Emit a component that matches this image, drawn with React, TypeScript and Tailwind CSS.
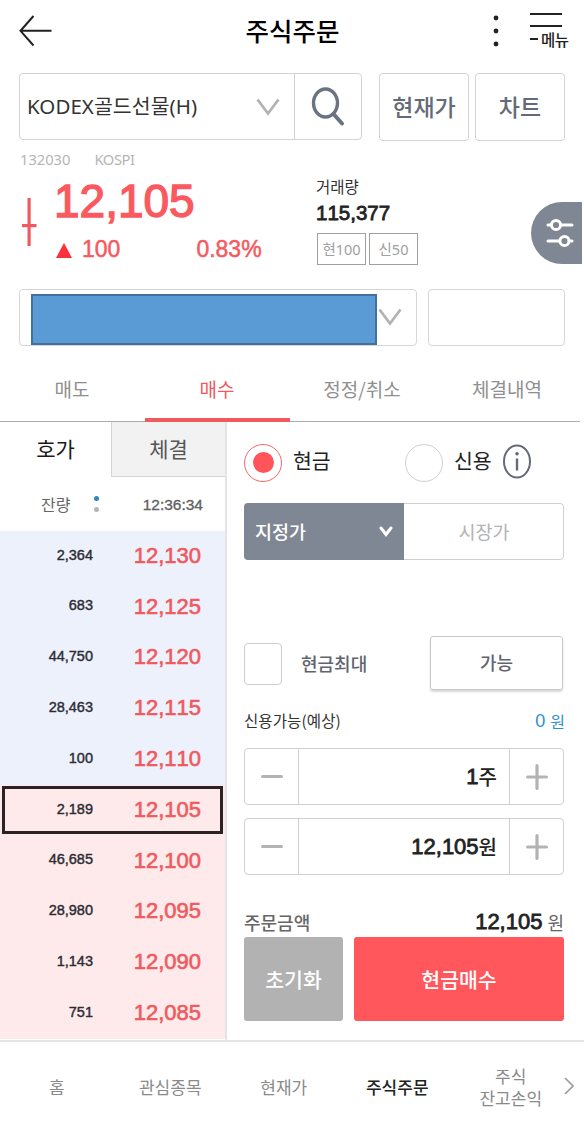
import { clsx } from "clsx";

interface Quote {
  volume: string;
  price: string;
}

const asks: Quote[] = [
  { volume: "2,364", price: "12,130" },
  { volume: "683", price: "12,125" },
  { volume: "44,750", price: "12,120" },
  { volume: "28,463", price: "12,115" },
  { volume: "100", price: "12,110" },
];

const bids: Quote[] = [
  { volume: "2,189", price: "12,105" },
  { volume: "46,685", price: "12,100" },
  { volume: "28,980", price: "12,095" },
  { volume: "1,143", price: "12,090" },
  { volume: "751", price: "12,085" },
];

const orderTabs = ["매도", "매수", "정정/취소", "체결내역"];
const navItems = ["홈", "관심종목", "현재가", "주식주문", "주식\n잔고손익"];

const CURRENT_PRICE = "12,105";

const Chevron = ({ className }: { className?: string }) => (
  <svg className={className} width="24" height="18" viewBox="0 0 24 18" fill="none">
    <path d="M1.5 1.5 12 15.5 22.5 1.5" stroke="#b3b3b3" strokeWidth="2.8" />
  </svg>
);

const Header = () => (
  <header className="flex h-[62px] items-center justify-between pl-[19px] pr-[14px]">
    <div className="w-[78px]">
      <svg width="34" height="32" viewBox="0 0 34 32" fill="none" stroke="#222" strokeWidth="2">
        <path d="M14.5 1 1.5 15.8 14.5 30.5M1.5 15.8H32.5" />
      </svg>
    </div>
    <h1 className="-mt-[2px] mr-[5px] text-[25.5px] font-medium leading-none text-black">주식주문</h1>
    <div className="flex w-[77px] items-center justify-between">
      <svg width="6" height="32" viewBox="0 0 6 32" fill="#222">
        <circle cx="3" cy="3" r="2.4" />
        <circle cx="3" cy="16" r="2.4" />
        <circle cx="3" cy="29" r="2.4" />
      </svg>
      <div className="-mt-[2px] flex w-[40px] flex-col">
        <span className="h-[2px] w-[32px] bg-[#222]" />
        <span className="mt-[10px] h-[2px] w-[32px] bg-[#222]" />
        <span className="mt-[3px] flex items-center gap-[3px]">
          <span className="h-[2px] w-[8px] shrink-0 bg-[#222]" />
          <span className="whitespace-nowrap text-[15.5px] font-medium leading-[18px] tracking-[-0.5px] text-[#222]">
            메뉴
          </span>
        </span>
      </div>
    </div>
  </header>
);

const SearchRow = () => (
  <div className="mt-[11px] flex pl-[19px]">
    <div className="flex h-[67px] w-[343px] rounded-[4px] border-[1.5px] border-[#d3d3d3]">
      <div className="flex w-[275px] items-center justify-between border-r border-[#d3d3d3] pl-[7px] pr-[14px]">
        <span className="font-['Noto_Sans','Noto_Sans_CJK_KR',sans-serif] text-[20.5px] leading-none tracking-[0.05px] text-[#333]">
          KODEX골드선물(H)
        </span>
        <Chevron />
      </div>
      <div className="flex flex-1 items-center justify-center">
        <svg width="34" height="40" viewBox="0 0 34 40" fill="none" stroke="#6b7280">
          <ellipse cx="14.5" cy="16" rx="12" ry="14" strokeWidth="3.4" />
          <path d="m22.5 27 8.5 9.5" strokeWidth="4" strokeLinecap="round" />
        </svg>
      </div>
    </div>
    <button className="ml-[17px] h-[68px] w-[90px] rounded-[4px] border-[1.5px] border-[#d3d3d3] pb-[2px] text-[23px] font-medium text-[#646a77]">
      현재가
    </button>
    <button className="ml-[6px] h-[68px] w-[90px] rounded-[4px] border-[1.5px] border-[#d3d3d3] pb-[2px] text-[23px] font-medium text-[#646a77]">
      차트
    </button>
  </div>
);

const PriceSummary = () => (
  <section className="flex h-[148px] justify-between pl-[20px] pr-[2px]">
    <div className="w-[296px]">
      <div className="mt-[9px] flex gap-[24px] font-['Noto_Sans',sans-serif] text-[14.7px] leading-[18px] text-[#b5b5b5]">
        <span>132030</span>
        <span className="tracking-[-0.4px]">KOSPI</span>
      </div>
      <div className="mt-[8px] flex text-[#fa5a5f]">
        <svg className="ml-[2px] mt-[21px]" width="15" height="50" viewBox="0 0 15 50" fill="#f0595e">
          <rect x="5.5" y="1" width="3.2" height="48" />
          <rect x="0" y="27" width="14.5" height="3.2" />
        </svg>
        <div className="ml-[17px] font-['Liberation_Sans',Arial,sans-serif]">
          <div className="mt-[2px] text-[46px] leading-[46px] [-webkit-text-stroke:1.4px_#fa5a5f]">12,105</div>
          <div className="mt-[13px] flex items-center text-[23px] leading-[24px] [-webkit-text-stroke:0.5px_#f0595e]">
            <svg className="ml-[2px] mt-[2px]" width="16" height="15" viewBox="0 0 16 15">
              <path d="M8 0 16 15H0z" fill="#fb3038" />
            </svg>
            <span className="ml-[10px]">100</span>
            <span className="ml-[76px]">0.83%</span>
          </div>
        </div>
      </div>
    </div>
    <div className="flex-1 pt-[36px]">
      <div className="text-[15.5px] leading-[18px] text-[#333]">거래량</div>
      <div className="mt-[7px] font-['Liberation_Sans',Arial,sans-serif] text-[20.5px] leading-[22px] text-[#222] [-webkit-text-stroke:0.8px_#222] [font-kerning:none]">
        115,377
      </div>
      <div className="ml-px mt-[9px] flex gap-[3px] font-['Noto_Sans','Noto_Sans_CJK_KR',sans-serif] text-[14.5px] leading-none text-[#a0a0a0]">
        <span className="flex h-[32px] w-[49px] items-center justify-center border-[1.5px] border-[#a0a0a0]">현100</span>
        <span className="flex h-[32px] w-[49px] items-center justify-center border-[1.5px] border-[#a0a0a0]">신50</span>
      </div>
    </div>
    <div className="mt-[61px] flex h-[62px] w-[51px] items-center rounded-l-[31px] bg-[#808794] pl-[15px]">
      <svg width="28" height="30" viewBox="0 0 28 30" fill="none" stroke="#fff" strokeWidth="3" strokeLinecap="round">
        <path d="M2 7h3M15 7h11M2 23h11M23 23h3" />
        <circle cx="10" cy="7" r="4.6" />
        <circle cx="18.5" cy="23" r="4.6" />
      </svg>
    </div>
  </section>
);

const AccountRow = () => (
  <div className="flex gap-[11px] pl-[19px]">
    <div className="flex h-[57px] w-[398px] rounded-[4px] border-[1.5px] border-[#d6d6d6] pl-[11px] pt-[4px]">
      <div className="h-[51px] w-[346px] shrink-0 border-2 border-[#41719c] bg-[#5b9bd5]" />
      <Chevron className="ml-px mt-[14px]" />
    </div>
    <div className="h-[57px] w-[137px] rounded-[4px] border-[1.5px] border-[#d6d6d6]" />
  </div>
);

const OrderTabs = () => (
  <div className="mt-[12px] flex h-[64px] w-[580px] border-b-[1.5px] border-[#a9aeac]">
    {orderTabs.map((tab) => (
      <div
        key={tab}
        className={clsx(
          "-mb-px flex w-[145px] justify-center pr-px pt-[21px] text-[19px] leading-[20px]",
          tab === "매수" ? "border-b-4 border-[#f0595e] text-[#f0595e]" : "text-[#8f8f8f]"
        )}
      >
        {tab}
      </div>
    ))}
  </div>
);

const QuoteRow = ({ volume, price }: Quote) => (
  <div className="relative flex h-[50.8px] items-center pb-[2px] font-['Liberation_Sans',Arial,sans-serif] [font-kerning:none]">
    {price === CURRENT_PRICE && (
      <div className="absolute left-[2px] top-[1px] h-[48px] w-[221px] border-[3px] border-[#2b2224]" />
    )}
    <span className="w-[93px] text-right text-[14.5px] text-[#2b2b33] [-webkit-text-stroke:0.4px_#2b2b33]">
      {volume}
    </span>
    <span className="w-[108px] text-right text-[22px] text-[#f0595e] [-webkit-text-stroke:0.6px_#f0595e]">
      {price}
    </span>
  </div>
);

const OrderBook = () => (
  <div className="w-[227px] border-r-2 border-[#e4e4e6]">
    <div className="flex h-[55px] text-[21px]">
      <div className="flex w-[111px] items-center justify-center pb-[2px] text-[#1a1a1a]">호가</div>
      <div className="flex flex-1 items-center justify-center border-b border-l border-[#d5d5d5] bg-[#f2f2f2] text-[#555]">
        체결
      </div>
    </div>
    <div className="flex h-[54px] items-center text-[#666]">
      <span className="ml-[41px] w-[50px] text-[16px]">잔량</span>
      <div className="flex w-[10px] flex-col items-center gap-[6px]">
        <span className="size-[5px] rounded-full bg-[#2f86c0]" />
        <span className="size-[5px] rounded-full bg-[#b5b5b5]" />
      </div>
      <span className="flex-1 pr-[22px] pt-[2px] text-right font-['Liberation_Sans',Arial,sans-serif] text-[15.5px] [-webkit-text-stroke:0.3px_#555]">
        12:36:34
      </span>
    </div>
    <div className="bg-[#edf1fc]">
      {asks.map((quote) => (
        <QuoteRow key={quote.price} {...quote} />
      ))}
    </div>
    <div className="bg-[#feeaea]">
      {bids.map((quote) => (
        <QuoteRow key={quote.price} {...quote} />
      ))}
    </div>
  </div>
);

const Stepper = ({ value, unit }: { value: string; unit: string }) => (
  <div className="flex h-[57px] w-[320px] rounded-[4px] border-[1.5px] border-[#d0d0d0]">
    <button className="flex w-[53px] items-center justify-center">
      <span className="h-[3.5px] w-[22px] rounded-sm bg-[#b3b3b3]" />
    </button>
    <div className="flex flex-1 items-center justify-end border-x-[1.5px] border-[#d0d0d0] pr-[12px] leading-none text-[#222]">
      <span className="font-['Liberation_Sans',Arial,sans-serif] text-[22px] [-webkit-text-stroke:0.8px_#222]">
        {value}
      </span>
      <span className="text-[20px] font-medium">{unit}</span>
    </div>
    <button className="flex w-[53px] items-center justify-center">
      <svg width="22" height="26" viewBox="0 0 22 26" stroke="#b3b3b3" strokeWidth="3.2" strokeLinecap="round">
        <path d="M11 1.6v22.8M1.6 13h18.8" />
      </svg>
    </button>
  </div>
);

const OrderForm = () => (
  <div className="flex-1 pl-[17px] pt-[21px]">
    <div className="flex h-[39px] items-center text-[20.5px] leading-none text-[#222]">
      <div className="flex size-[38px] items-center justify-center rounded-full border-[1.5px] border-[#f5666b]">
        <span className="size-[21px] rounded-full bg-[#ff555a]" />
      </div>
      <span className="-mt-[5px] ml-[11px] w-[112px]">현금</span>
      <div className="size-[38px] rounded-full border border-[#cfcfcf]" />
      <span className="-mt-[5px] ml-[11px]">신용</span>
      <svg className="-mt-[3px] ml-[10px]" width="30" height="35" viewBox="0 0 30 35" fill="none" stroke="#646a77">
        <ellipse cx="15" cy="17.5" rx="13" ry="16" strokeWidth="2" />
        <path d="M15 14.5v12" strokeWidth="2.4" />
        <circle cx="15" cy="9.7" r="1.8" fill="#646a77" stroke="none" />
      </svg>
    </div>

    <div className="mt-[21px] flex h-[57px] w-[320px] overflow-hidden rounded-[4px]">
      <div className="flex w-[160px] items-center justify-between bg-[#808794] pl-[11px] pr-[11px] text-[18.5px] font-medium text-white">
        지정가
        <svg width="14" height="11" viewBox="0 0 14 11" fill="none" stroke="#fff" strokeWidth="3" strokeLinecap="round">
          <path d="m2 2 5 6.5L12 2" />
        </svg>
      </div>
      <div className="flex flex-1 items-center justify-center rounded-r-[4px] border-[1.5px] border-l-0 border-[#d0d0d0] pl-px text-[18.5px] text-[#b3b3b3]">
        시장가
      </div>
    </div>

    <div className="mt-[76px] flex h-[55px] items-center text-[18px] font-medium text-[#5f6470]">
      <div className="h-[42px] w-[38px] rounded-[4px] border-[1.5px] border-[#cdcdcd]" />
      <span className="ml-[19px] w-[129px]">현금최대</span>
      <button className="-mt-[2px] h-[54px] w-[133px] rounded-[3px] border border-[#c8c8c8] shadow-[0_2px_2px_rgba(0,0,0,0.15)]">
        가능
      </button>
    </div>

    <div className="mt-[19px] flex h-[22px] w-[321px] items-center justify-between leading-none">
      <span className="text-[15.5px] tracking-[0.1px] text-[#333]">신용가능(예상)</span>
      <span className="flex items-center gap-[5px] text-[16px] text-[#2f8fd0]">
        <span className="font-['Liberation_Sans',Arial,sans-serif] text-[18px]">0</span>원
      </span>
    </div>

    <div className="mt-[16px] flex flex-col gap-[13px]">
      <Stepper value="1" unit="주" />
      <Stepper value="12,105" unit="원" />
    </div>

    <div className="mt-[35px] flex h-[24px] w-[320px] items-center justify-between leading-none">
      <span className="text-[18px] font-medium text-[#666]">주문금액</span>
      <span className="flex items-center gap-[5px] text-[18px] text-[#666]">
        <span className="font-['Liberation_Sans',Arial,sans-serif] text-[22px] text-[#222] [-webkit-text-stroke:0.8px_#222]">
          12,105
        </span>
        원
      </span>
    </div>
    <div className="mt-[3px] flex h-[84px] gap-[11px] text-[20.5px] font-medium text-white">
      <button className="w-[99px] rounded-[3px] bg-[#b2b2b2]">초기화</button>
      <button className="w-[210px] rounded-[3px] bg-[#ff575b]">현금매수</button>
    </div>
  </div>
);

const BottomNav = () => (
  <nav className="flex h-[85px] items-center border-t-2 border-[#e4e4e4] pt-[7px]">
    {navItems.map((item) => (
      <div
        key={item}
        className={clsx(
          "w-[113.5px] shrink-0 whitespace-pre text-center text-[17px] leading-[22px]",
          item === "주식주문" ? "font-medium text-[#222]" : "text-[#8a8a8a]"
        )}
      >
        {item}
      </div>
    ))}
    <svg className="-ml-[4px] -mt-[2px]" width="10" height="18" viewBox="0 0 10 18" fill="none">
      <path d="M1 1 9 9 1 17" stroke="#9a9a9a" strokeWidth="1.6" />
    </svg>
  </nav>
);

const App = () => (
  <div className="h-[1125px] w-[584px] overflow-hidden bg-white font-['Noto_Sans_CJK_KR',sans-serif]">
    <Header />
    <SearchRow />
    <PriceSummary />
    <AccountRow />
    <OrderTabs />
    <main className="flex h-[618px]">
      <OrderBook />
      <OrderForm />
    </main>
    <BottomNav />
  </div>
);

export default App;
